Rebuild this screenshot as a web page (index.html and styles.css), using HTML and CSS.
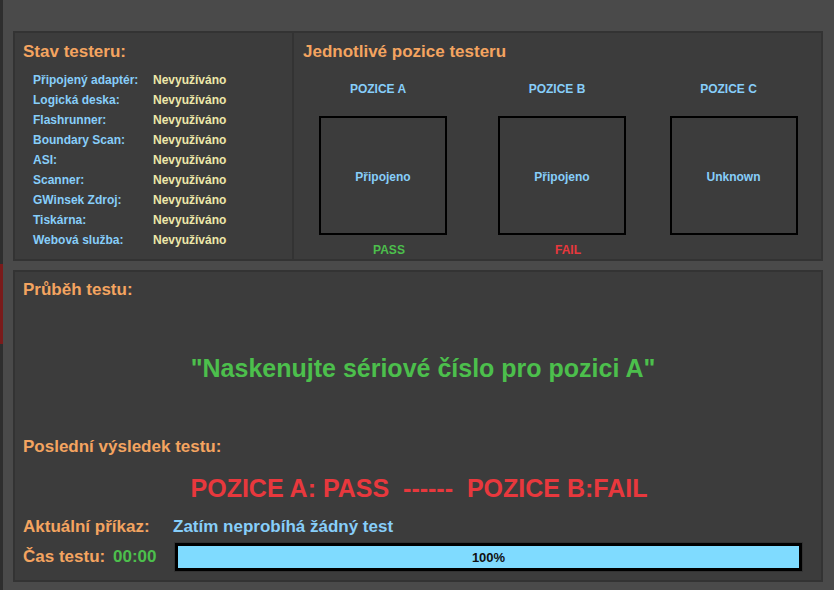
FILE: index.html
```html
<!DOCTYPE html>
<html lang="cs">
<head>
    <meta charset="UTF-8">
    <title>Tester</title>
    <link rel="stylesheet" href="styles.css">
</head>
<body>
    <div class="edge"><div class="edge-mark"></div></div>

    <main class="app">
        <section class="top">
            <div class="status">
                <h2 class="title">Stav testeru:</h2>
                <div class="status-list">
                    <span class="label">Připojený adaptér:</span><span class="value">Nevyužíváno</span>
                    <span class="label">Logická deska:</span><span class="value">Nevyužíváno</span>
                    <span class="label">Flashrunner:</span><span class="value">Nevyužíváno</span>
                    <span class="label">Boundary Scan:</span><span class="value">Nevyužíváno</span>
                    <span class="label">ASI:</span><span class="value">Nevyužíváno</span>
                    <span class="label">Scanner:</span><span class="value">Nevyužíváno</span>
                    <span class="label">GWinsek Zdroj:</span><span class="value">Nevyužíváno</span>
                    <span class="label">Tiskárna:</span><span class="value">Nevyužíváno</span>
                    <span class="label">Webová služba:</span><span class="value">Nevyužíváno</span>
                </div>
            </div>

            <div class="positions">
                <h2 class="title">Jednotlivé pozice testeru</h2>
                <div class="slots">
                    <div class="slot">
                        <div class="slot-name">POZICE A</div>
                        <div class="slot-box">Připojeno</div>
                        <div class="slot-result pass">PASS</div>
                    </div>
                    <div class="slot">
                        <div class="slot-name">POZICE B</div>
                        <div class="slot-box">Připojeno</div>
                        <div class="slot-result fail">FAIL</div>
                    </div>
                    <div class="slot">
                        <div class="slot-name">POZICE C</div>
                        <div class="slot-box">Unknown</div>
                        <div class="slot-result"></div>
                    </div>
                </div>
            </div>
        </section>

        <section class="run">
            <h2 class="title">Průběh testu:</h2>
            <p class="prompt">"Naskenujte sériové číslo pro pozici A"</p>

            <h2 class="title last-title">Poslední výsledek testu:</h2>
            <p class="result">POZICE A: PASS  ------  POZICE B:FAIL</p>

            <div class="command">
                <span class="title">Aktuální příkaz:</span>
                <span class="command-text">Zatím neprobíhá žádný test</span>
            </div>

            <div class="timer">
                <span class="title">Čas testu:</span>
                <span class="time">00:00</span>
                <div class="bar"><div class="bar-fill" style="width: 100%"></div><span class="bar-text">100%</span></div>
            </div>
        </section>
    </main>
</body>
</html>
```

FILE: styles.css
```css
* {
    margin: 0;
    padding: 0;
    box-sizing: border-box;
}

body {
    font-family: 'Liberation Sans', Arial, sans-serif;
    font-weight: bold;
    background: #4a4a4a;
    display: flex;
    height: 590px;
    overflow: hidden;
}

/* window edge on the left */
.edge {
    width: 3px;
    background: #2e2e2e;
}

.edge-mark {
    margin-top: 264px;
    height: 80px;
    background: #7a1b1b;
}

.app {
    flex: 1;
    padding: 31px 11px 0 10px;
}

.title {
    font-size: 17px;
    line-height: 20px;
    color: #f4a460;
    font-weight: bold;
}

/* top panel */
.top {
    display: grid;
    grid-template-columns: 279px 1fr;
    height: 230px;
    background: #3c3c3c;
    border: 2px solid #333;
}

.status {
    border-right: 2px solid #333;
    padding: 9px 0 0 8px;
}

.status-list {
    display: grid;
    grid-template-columns: 120px 1fr;
    margin-top: 8px;
    padding-left: 10px;
    font-size: 12px;
    line-height: 20px;
}

.label {
    color: #87cefa;
}

.value {
    color: #eee8aa;
}

.positions {
    padding: 9px 0 0 9px;
}

.slots {
    display: grid;
    grid-template-columns: 178px 180px 163px;
    margin-left: -9px;
    margin-top: 19px;
}

.slot {
    display: flex;
    flex-direction: column;
    align-items: center;
    font-size: 12px;
    line-height: 16px;
}

.slot-name {
    color: #87cefa;
    padding-right: 10px;
}

.slot-box {
    width: 128px;
    height: 119px;
    margin-top: 19px;
    border: 2px solid #000;
    display: flex;
    align-items: center;
    justify-content: center;
    color: #87cefa;
    padding-top: 2px;
}

.slot-result {
    margin-top: 7px;
    height: 16px;
    padding-left: 12px;
}

.pass {
    color: #4cbf4c;
}

.fail {
    color: #e8383d;
}

/* bottom panel */
.run {
    margin-top: 9px;
    height: 312px;
    background: #3c3c3c;
    border: 2px solid #333;
    padding: 8px 0 0 8px;
}

.prompt {
    margin-top: 53px;
    text-align: center;
    font-size: 25px;
    line-height: 30px;
    color: #4cbf4c;
    padding-left: 2px;
}

.last-title {
    margin-top: 54px;
}

.result {
    margin-top: 16px;
    text-align: center;
    white-space: pre;
    font-size: 25px;
    line-height: 30px;
    color: #e8383d;
    padding-right: 6px;
}

.command {
    margin-top: 14px;
    display: grid;
    grid-template-columns: 150px 1fr;
}

.command-text {
    font-size: 17px;
    line-height: 20px;
    color: #87cefa;
}

.timer {
    margin-top: 6px;
    display: grid;
    grid-template-columns: 90px 62px 627px;
    align-items: center;
}

.time {
    font-size: 17px;
    line-height: 20px;
    color: #4cbf4c;
}

.bar {
    position: relative;
    height: 28px;
    border: 3px solid #000;
    background: #3c3c3c;
    box-shadow: 0 0 0 1px #333;
}

.bar-fill {
    height: 100%;
    background: #7fdbff;
}

.bar-text {
    position: absolute;
    inset: 0;
    display: flex;
    align-items: center;
    justify-content: center;
    font-size: 13px;
    color: #111;
}
```
